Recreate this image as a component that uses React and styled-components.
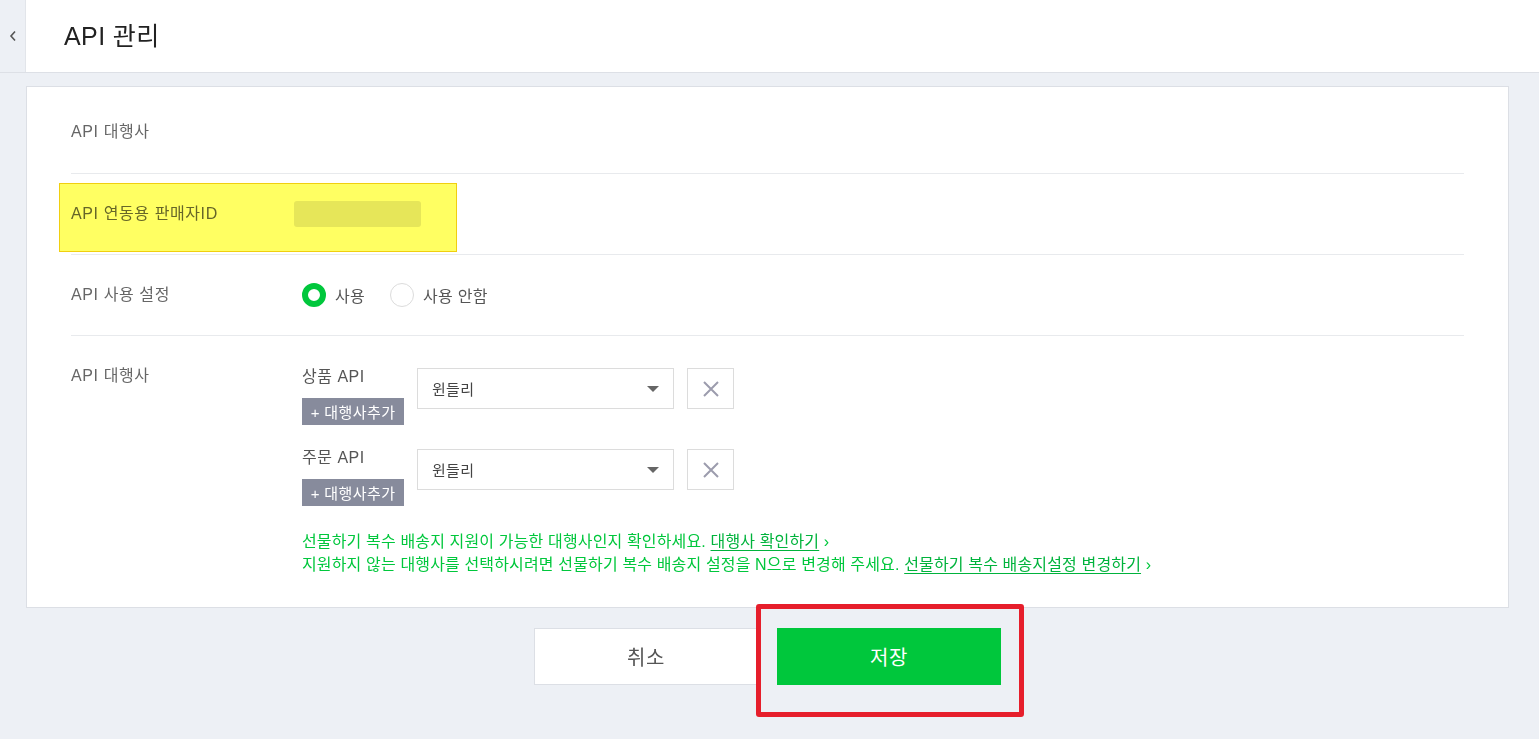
import React from "react";
import styled, { createGlobalStyle } from "styled-components";

const Global = createGlobalStyle`
  html, body { margin: 0; padding: 0; }
  body {
    background: #edf0f5;
    font-family: "Liberation Sans", "Noto Sans CJK KR", sans-serif;
    color: #333;
  }
  * { box-sizing: border-box; }
`;

const Page = styled.div`
  display: flex;
  flex-direction: column;
  min-height: 739px;
`;

const Header = styled.header`
  display: flex;
  height: 73px;
  border-bottom: 1px solid #dde0e6;
`;

const BackStrip = styled.div`
  width: 26px;
  background: #edf0f5;
  border-right: 1px solid #e2e5ea;
  display: flex;
  justify-content: center;
  padding-top: 30px;
`;

const TitleArea = styled.div`
  flex: 1;
  background: #fff;
  padding-left: 38px;
  display: flex;
  align-items: center;
`;

const Title = styled.h1`
  margin: 0;
  font-size: 25px;
  font-weight: 400;
  color: #222;
  letter-spacing: 0.4px;
  padding-bottom: 4px;
`;

const Main = styled.main`
  padding: 13px 30px 0 26px;
`;

const Card = styled.section`
  background: #fff;
  border: 1px solid #dcdfe5;
  padding: 0 44px;
`;

const Row = styled.div`
  position: relative;
  display: flex;
  align-items: ${(p) => (p.$top ? "flex-start" : "center")};
  padding: ${(p) => p.$pad || "30px 0"};
  border-bottom: ${(p) => (p.$last ? "none" : "1px solid #e8eaed")};
`;

const Label = styled.div`
  width: 231px;
  flex-shrink: 0;
  font-size: 16px;
  letter-spacing: 0.6px;
  line-height: 20px;
  color: #666;
`;

const Value = styled.div`
  flex: 1;
  display: flex;
  align-items: center;
`;

const Highlight = styled.div`
  position: absolute;
  left: -12px;
  top: 9px;
  width: 398px;
  height: 69px;
  background: #ffff62;
  border: 1px solid #f0cf10;
  mix-blend-mode: multiply;
  pointer-events: none;
`;

const MaskedId = styled.div`
  margin-left: -8px;
  width: 127px;
  height: 26px;
  border-radius: 3px;
  background: #e6e6e6;
`;

const RadioGroup = styled.div`
  display: flex;
  align-items: center;
  gap: 9px;
`;

const RadioItem = styled.label`
  display: flex;
  align-items: center;
  gap: 9px;
  font-size: 16px;
  letter-spacing: 0.3px;
  color: #555;
  margin-right: 16px;
`;

const RadioCircle = styled.span`
  width: 24px;
  height: 24px;
  border-radius: 50%;
  background: #fff;
  border: ${(p) => (p.$on ? "6px solid #00c73c" : "1px solid #dcdcdc")};
`;

const ApiList = styled.div`
  display: flex;
  flex-direction: column;
  padding-top: 2px;
`;

const ApiGroup = styled.div`
  display: flex;
  align-items: flex-start;
  margin-bottom: 24px;
`;

const ApiSide = styled.div`
  width: 115px;
  display: flex;
  flex-direction: column;
  align-items: flex-start;
`;

const ApiName = styled.div`
  font-size: 16px;
  letter-spacing: 0.5px;
  line-height: 18px;
  color: #555;
  margin-bottom: 12px;
`;

const AddButton = styled.button`
  height: 27px;
  width: 102px;
  border: none;
  background: #878b9c;
  color: #fff;
  font-family: inherit;
  font-size: 15px;
  letter-spacing: 0.4px;
  padding: 0;
  cursor: pointer;
`;

const Select = styled.div`
  width: 257px;
  height: 41px;
  border: 1px solid #dcdcdc;
  display: flex;
  align-items: center;
  justify-content: space-between;
  padding: 0 14px 0 14px;
  font-size: 15px;
  letter-spacing: 0.3px;
  color: #444;
`;

const Caret = styled.span`
  width: 0;
  height: 0;
  border-left: 6px solid transparent;
  border-right: 6px solid transparent;
  border-top: 6px solid #666;
`;

const RemoveBox = styled.button`
  width: 47px;
  height: 41px;
  margin-left: 13px;
  border: 1px solid #dcdcdc;
  background: #fff;
  display: flex;
  align-items: center;
  justify-content: center;
  padding: 0;
`;

const Notice = styled.p`
  margin: 0;
  font-size: 16px;
  line-height: 23px;
  color: #00c73c;
  letter-spacing: 0.15px;
  white-space: nowrap;
`;

const NoticeLink = styled.a`
  color: #00b33c;
  text-decoration: underline;
  text-underline-offset: 3px;
`;

const Footer = styled.div`
  display: flex;
  justify-content: center;
  gap: 19px;
  padding: 20px 0 0 0;
`;

const BaseButton = styled.button`
  width: 224px;
  height: 57px;
  font-family: inherit;
  font-size: 20px;
  letter-spacing: 0.5px;
  cursor: pointer;
  border: 1px solid ${(p) => (p.$primary ? "#00c73c" : "#dcdfe5")};
  background: ${(p) => (p.$primary ? "#00c73c" : "#fff")};
  color: ${(p) => (p.$primary ? "#fff" : "#555")};
`;

const Emphasis = styled.div`
  position: relative;
`;

const RedFrame = styled.div`
  position: absolute;
  left: -21px;
  top: -24px;
  right: -23px;
  bottom: -32px;
  border: 5px solid #e61e2b;
  border-radius: 3px;
  pointer-events: none;
`;

const Chevron = () => (
  <svg width="8" height="12" viewBox="0 0 8 12">
    <path d="M6 1.5 L2 6 L6 10.5" fill="none" stroke="#555" strokeWidth="1.6" />
  </svg>
);

const XIcon = () => (
  <svg width="18" height="18" viewBox="0 0 18 18">
    <path d="M2 2 L16 16 M16 2 L2 16" stroke="#9c9cad" strokeWidth="2" />
  </svg>
);

const apis = ["상품 API", "주문 API"];

export default function App() {
  return (
    <Page>
      <Global />
      <Header>
        <BackStrip>
          <Chevron />
        </BackStrip>
        <TitleArea>
          <Title>API 관리</Title>
        </TitleArea>
      </Header>
      <Main>
        <Card>
          <Row $pad="35px 0 31px">
            <Label>API 대행사</Label>
          </Row>
          <Row $pad="27px 0">
            <Label>API 연동용 판매자ID</Label>
            <Value>
              <MaskedId />
            </Value>
            <Highlight />
          </Row>
          <Row $pad="28px 0">
            <Label>API 사용 설정</Label>
            <Value>
              <RadioGroup>
                <RadioItem>
                  <RadioCircle $on />
                  사용
                </RadioItem>
                <RadioItem>
                  <RadioCircle />
                  사용 안함
                </RadioItem>
              </RadioGroup>
            </Value>
          </Row>
          <Row $top $last $pad="30px 0 31px">
            <Label>API 대행사</Label>
            <ApiList>
              {apis.map((name) => (
                <ApiGroup key={name}>
                  <ApiSide>
                    <ApiName>{name}</ApiName>
                    <AddButton>+ 대행사추가</AddButton>
                  </ApiSide>
                  <Select>
                    윈들리
                    <Caret />
                  </Select>
                  <RemoveBox>
                    <XIcon />
                  </RemoveBox>
                </ApiGroup>
              ))}
              <Notice>
                선물하기 복수 배송지 지원이 가능한 대행사인지 확인하세요.{" "}
                <NoticeLink>대행사 확인하기</NoticeLink> ›
              </Notice>
              <Notice>
                지원하지 않는 대행사를 선택하시려면 선물하기 복수 배송지 설정을 N으로 변경해 주세요.{" "}
                <NoticeLink>선물하기 복수 배송지설정 변경하기</NoticeLink> ›
              </Notice>
            </ApiList>
          </Row>
        </Card>
        <Footer>
          <BaseButton>취소</BaseButton>
          <Emphasis>
            <BaseButton $primary>저장</BaseButton>
            <RedFrame />
          </Emphasis>
        </Footer>
      </Main>
    </Page>
  );
}
